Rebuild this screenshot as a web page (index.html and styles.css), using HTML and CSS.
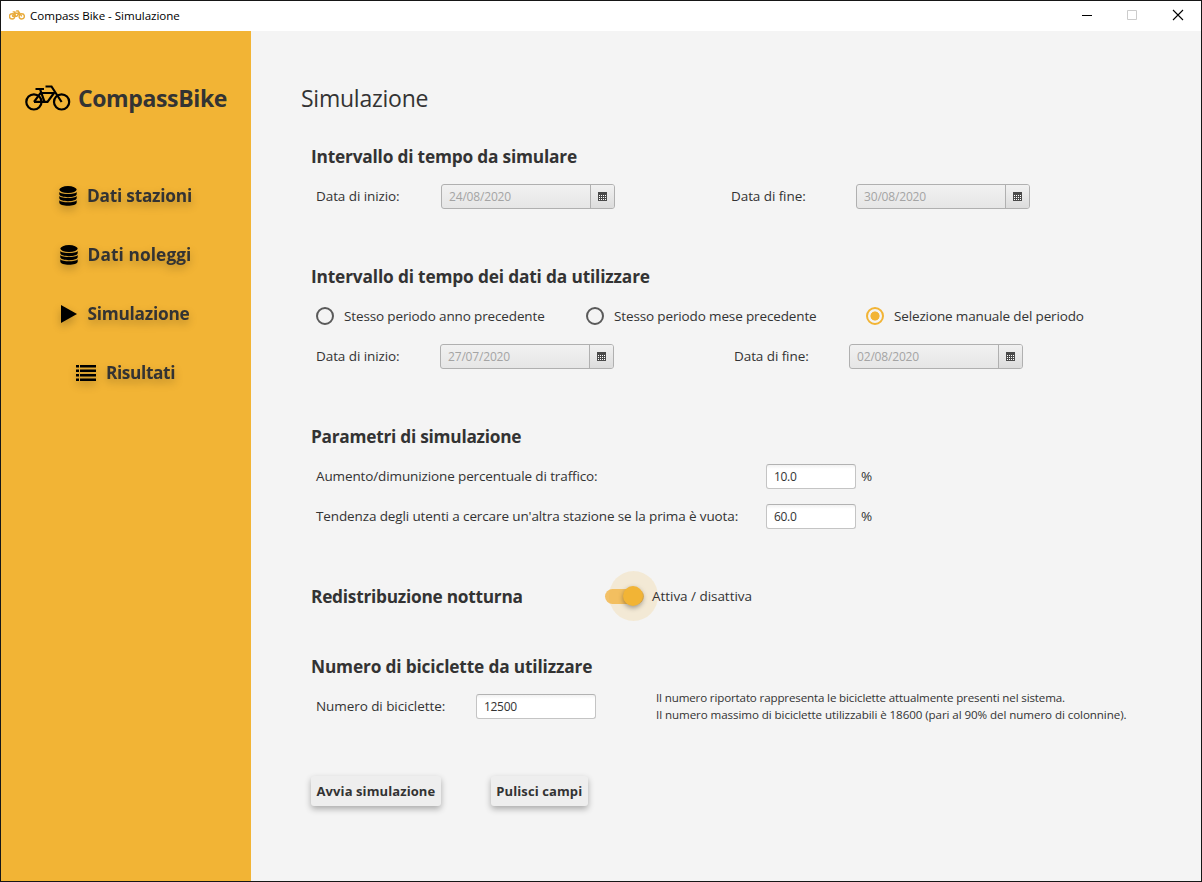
FILE: index.html
```html
<!DOCTYPE html>
<html lang="it">
<head>
<meta charset="utf-8">
<title>Compass Bike - Simulazione</title>
<link rel="stylesheet" href="styles.css">
</head>
<body>
<svg class="defs" aria-hidden="true">
  <symbol id="bike" viewBox="0 0 46 26">
    <g fill="none" stroke="currentColor">
      <circle cx="8.900" cy="16.900" r="7.600"/><circle cx="36.600" cy="16.900" r="7.600"/>
      <path d="M10.500 4H19M20.500 1.500H26.500L36.600 17M15 4L19.500 16.900M9 16.900L15.500 8H29L22.500 16.900H9"/>
    </g>
  </symbol>
  <symbol id="database" viewBox="0 0 18 20">
    <ellipse cx="9" cy="3.600" rx="8.700" ry="3.500"/>
    <path d="M.3 6c2 2.800 15.400 2.800 17.400 0v2c0 4.200-17.400 4.200-17.400 0zM.3 10c2 2.800 15.400 2.800 17.400 0v2c0 4.200-17.400 4.200-17.400 0zM.3 14.200c2 2.800 15.400 2.800 17.400 0v2.200c0 4.400-17.400 4.400-17.400 0z"/>
  </symbol>
  <symbol id="calendar" viewBox="0 0 9 9">
    <path fill="#4a4a4a" d="M0 0h9v9H0z"/>
    <path stroke="#fff" stroke-dasharray="1 1" d="M1 3.500h7M1 5.500h7M1 7.500h7"/>
  </symbol>
</svg>
<div class="window">
  <header class="titlebar">
    <svg class="app-icon"><use href="#bike"/></svg>
    <span class="app-title">Compass Bike - Simulazione</span>
    <svg class="controls" viewBox="0 0 104 12" fill="none">
      <path stroke="#000" d="M1 6.500h10"/>
      <path stroke="#ccc" d="M46.500 1.500h9v9h-9z"/>
      <path stroke="#000" stroke-width="1.100" d="M92 1l10 10M102 1L92 11"/>
    </svg>
  </header>
  <div class="body">
    <nav class="sidebar">
      <div class="brand"><svg class="brand-icon"><use href="#bike"/></svg><span>CompassBike</span></div>
      <a class="nav-item"><svg class="db-icon"><use href="#database"/></svg><span>Dati stazioni</span></a>
      <a class="nav-item wide"><svg class="db-icon"><use href="#database"/></svg><span>Dati noleggi</span></a>
      <a class="nav-item"><svg class="play-icon" viewBox="0 0 16 18"><path d="M0 0l16 9L0 18z"/></svg><span>Simulazione</span></a>
      <a class="nav-item tight"><svg class="list-icon" viewBox="0 0 20 16"><path d="M0 0h3v2.500H0zM4 0h16v2.500H4zM0 4.500h3V7H0zM4 4.500h16V7H4zM0 9h3v2.500H0zM4 9h16v2.500H4zM0 13.500h3V16H0zM4 13.500h16V16H4z"/></svg><span>Risultati</span></a>
    </nav>
    <main class="content">
      <h1>Simulazione</h1>
      <section class="group">
        <h2>Intervallo di tempo da simulare</h2>
        <div class="row range">
          <label>Data di inizio:</label>
          <div class="picker"><span class="date">24/08/2020</span><button><svg><use href="#calendar"/></svg></button></div>
          <label>Data di fine:</label>
          <div class="picker"><span class="date">30/08/2020</span><button><svg><use href="#calendar"/></svg></button></div>
        </div>
      </section>
      <section class="group">
        <h2 class="loose">Intervallo di tempo dei dati da utilizzare</h2>
        <div class="row periods">
          <label class="radio"><i></i><span>Stesso periodo anno precedente</span></label>
          <label class="radio"><i></i><span>Stesso periodo mese precedente</span></label>
          <label class="radio checked"><i></i><span>Selezione manuale del periodo</span></label>
        </div>
        <div class="row range manual">
          <label>Data di inizio:</label>
          <div class="picker"><span class="date">27/07/2020</span><button><svg><use href="#calendar"/></svg></button></div>
          <label>Data di fine:</label>
          <div class="picker"><span class="date">02/08/2020</span><button><svg><use href="#calendar"/></svg></button></div>
        </div>
      </section>
      <section class="group">
        <h2 class="tight">Parametri di simulazione</h2>
        <div class="row param"><label>Aumento/dimunizione percentuale di traffico:</label><div class="field">10.0</div><span>%</span></div>
        <div class="row param"><label>Tendenza degli utenti a cercare un'altra stazione se la prima è vuota:</label><div class="field">60.0</div><span>%</span></div>
      </section>
      <section class="group night">
        <h2 class="tight">Redistribuzione notturna</h2>
        <div class="toggle"><span class="track"><span class="halo"></span><span class="knob"></span></span><span class="toggle-text">Attiva / disattiva</span></div>
      </section>
      <section class="group">
        <h2 class="loose">Numero di biciclette da utilizzare</h2>
        <div class="row bikes">
          <label>Numero di biciclette:</label>
          <div class="field">12500</div>
          <div class="notes">
            <p class="current">Il numero riportato rappresenta le biciclette attualmente presenti nel sistema.</p>
            <p class="maximum">Il numero massimo di biciclette utilizzabili è 18600 (pari al 90% del numero di colonnine).</p>
          </div>
        </div>
      </section>
      <div class="actions"><button class="action">Avvia simulazione</button><button class="action">Pulisci campi</button></div>
    </main>
  </div>
</div>
</body>
</html>
```
FILE: styles.css
```css
* { box-sizing: border-box; }
body { margin: 0; font-family: "Open Sans", "Noto Sans", sans-serif; font-size: 13.5px; color: #333; }
.defs { position: absolute; width: 0; height: 0; }
h1, h2, p { margin: 0; }

.window { width: 1202px; height: 882px; border: 1px solid #161616; display: flex; flex-direction: column; background: #f4f4f4; }
.titlebar { height: 30px; background: #fff; color: #000; display: flex; align-items: center; padding: 0 16px 2px 8px; font-size: 11.6px; letter-spacing: -.04px; flex: none; }
.app-icon { width: 16px; height: 10px; color: #e8ab3c; stroke-width: 4; margin-right: 5px; overflow: visible; }
.app-title { flex: 1; }
.controls { width: 104px; height: 12px; }
.body { flex: 1; display: flex; min-height: 0; }

.sidebar { width: 250px; background: #f2b435; display: flex; flex-direction: column; align-items: center; padding-top: 47px; flex: none; }
.brand { height: 40px; display: flex; align-items: center; gap: 7px; font-size: 23px; font-weight: 700; letter-spacing: -.36px; margin-bottom: 48px; }
.brand-icon { width: 46px; height: 26px; color: #000; stroke-width: 2.2; }
.nav-item { height: 59px; display: flex; align-items: center; gap: 10px; padding-right: 1px; font-size: 17.3px; font-weight: 700; letter-spacing: -.24px; filter: drop-shadow(0 4px 4px rgba(0,0,0,.24)); }
.nav-item.wide { letter-spacing: .09px; }
.nav-item.tight { letter-spacing: -.38px; }
.nav-item svg { fill: #000; }
.db-icon { width: 18px; height: 20px; }
.play-icon { width: 16px; height: 18px; }
.list-icon { width: 20px; height: 16px; }

.content { flex: 1; padding: 46px 0 0 60px; }
h1 { font-size: 23px; font-weight: 400; line-height: 42px; letter-spacing: -.24px; margin: 0 0 18px -10px; }
h2 { font-size: 17.3px; font-weight: 700; line-height: 40px; letter-spacing: -.195px; }
h2.loose { letter-spacing: -.16px; }
h2.tight { letter-spacing: -.255px; }
.group { margin-bottom: 40px; }
.row { height: 40px; display: flex; align-items: center; padding: 0 0 2px 5px; }
.range { display: grid; grid-template-columns: 125px 290px 125px 174px; letter-spacing: -.08px; }
.manual { grid-template-columns: 124px 294px 115px 174px; }
.picker { width: 174px; height: 25px; display: flex; border: 1px solid #b0b0b0; border-radius: 3px; background: linear-gradient(#f1f1f1, #e6e6e6); font-size: 12px; letter-spacing: -.17px; color: #a4a4a4; }
.date { flex: 1; padding-left: 7px; line-height: 23px; }
.picker button { width: 24px; border: 0; border-left: 1px solid #b0b0b0; border-radius: 0 2px 2px 0; padding: 0; display: flex; align-items: center; justify-content: center; background: linear-gradient(#f1f1f1, #dcdcdc); }
.picker svg { width: 9px; height: 9px; }
.periods { display: grid; grid-template-columns: 270px 280px 1fr; letter-spacing: -.135px; }
.radio { display: flex; align-items: center; gap: 10px; }
.radio i { width: 18px; height: 18px; border: 2px solid #5a5a5a; border-radius: 50%; }
.radio.checked i { border-color: #f2b435; background: radial-gradient(circle, #f2b435 4.2px, transparent 4.9px); }
.param { letter-spacing: -.12px; }
.param label { width: 450px; }
.field { width: 90px; height: 25px; line-height: 23px; border: 1px solid #c4c4c4; border-top-color: #b2b2b2; border-radius: 3px; background: linear-gradient(#f2f2f2, #fff 4px); padding-left: 7px; font-size: 12px; letter-spacing: -.3px; margin-right: 5px; }

.night { display: flex; margin-bottom: 30px; }
.night h2 { width: 294px; }
.toggle { display: flex; align-items: center; padding-bottom: 2px; }
.track { position: relative; width: 39px; height: 15px; border-radius: 8px; background: #f3c168; }
.halo { position: absolute; left: 4px; top: -18px; width: 49px; height: 50px; border-radius: 50%; background: rgba(242,180,53,.16); }
.knob { position: absolute; right: 1px; top: -3px; width: 20px; height: 20px; border-radius: 50%; background: #f2b435; box-shadow: 0 2px 5px rgba(0,0,0,.35); }
.toggle-text { margin-left: 8px; position: relative; letter-spacing: -.04px; }

.bikes { letter-spacing: -.07px; }
.bikes label { width: 160px; }
.bikes .field { width: 120px; margin-right: 60px; }
.notes { font-size: 11.6px; line-height: 17px; white-space: nowrap; }
.current { letter-spacing: -.149px; }
.maximum { letter-spacing: -.08px; }

.actions { display: flex; gap: 50px; margin-top: 49px; }
.action { height: 30px; border: 0; border-radius: 3px; padding: 0 5.500px; background: #eee; color: #333; font: 700 13px "Open Sans", sans-serif; letter-spacing: .1px; box-shadow: 0 3px 6px rgba(0,0,0,.3); }
```
